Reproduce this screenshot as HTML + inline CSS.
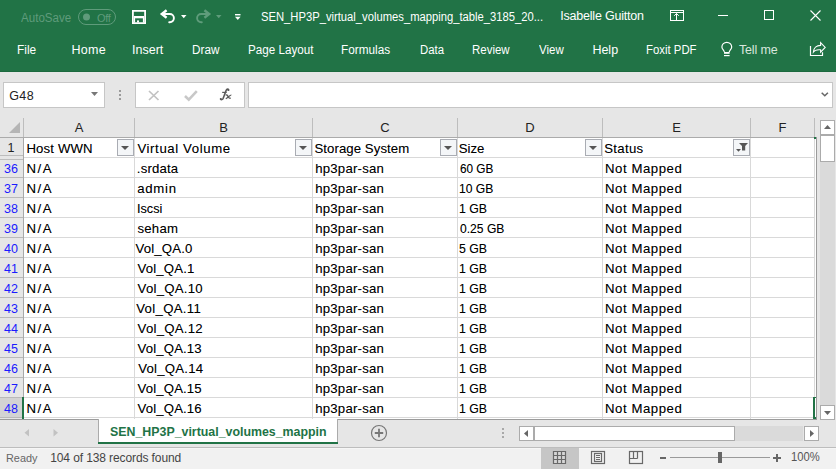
<!DOCTYPE html><html><head><meta charset="utf-8"><style>
html,body{margin:0;padding:0;width:836px;height:469px;overflow:hidden;background:#e6e6e6;}
body{position:relative;font-family:"Liberation Sans", sans-serif;}
.t{position:absolute;white-space:nowrap;}
.r{position:absolute;box-sizing:border-box;}
svg{position:absolute;overflow:visible;}
</style></head><body>
<div class="r" style="left:0px;top:0px;width:836px;height:71px;background:#217346;"></div>
<div class="r" style="left:0px;top:71px;width:836px;height:1px;background:#1c6a3f;"></div>
<div class="t" style="left:20.6px;top:10.67px;font-size:12.5px;line-height:15px;color:#5f9b7b;transform:scaleX(0.9262);transform-origin:0 0;">AutoSave</div>
<div class="r" style="left:78px;top:9px;width:38px;height:16px;border:1px solid #5f9b7b;border-radius:8px;"></div>
<svg style="left:0;top:0" width="1" height="1"><circle cx="86.5" cy="17" r="3.5" fill="#5f9b7b"/></svg>
<div class="t" style="left:97px;top:11.69px;font-size:11px;line-height:13px;color:#5f9b7b;letter-spacing:-0.3px;">Off</div>
<svg style="left:132px;top:10px" width="14" height="14" viewBox="0 0 14 14">
<path d="M0.9,0.9 H13.1 V13.1 H0.9 Z" fill="none" stroke="#fff" stroke-width="1.8"/>
<rect x="2" y="6" width="10" height="2.3" fill="#fff"/>
<rect x="2" y="8" width="1.1" height="4.5" fill="#fff"/><rect x="10.9" y="8" width="1.1" height="4.5" fill="#fff"/>
<rect x="5" y="10.4" width="2" height="2" fill="#fff"/>
</svg>
<svg style="left:160px;top:9px" width="16" height="15" viewBox="0 0 16 15">
<path d="M2.5,5 H9.8 A4.1,4.1 0 0 1 9.8,13.2 H9.2" fill="none" stroke="#fff" stroke-width="1.9" stroke-linecap="round"/>
<path d="M6.6,1.2 L1.8,5 L6.6,8.7" fill="none" stroke="#fff" stroke-width="2.4"/>
</svg>
<svg style="left:181px;top:15px" width="6" height="4"><path d="M0,0 H5.5 L2.75,3.2 Z" fill="#fff"/></svg>
<svg style="left:196px;top:9px" width="16" height="15" viewBox="0 0 16 15">
<path d="M12.5,5 H5.2 A4.1,4.1 0 0 0 5.2,13.2 H5.8" fill="none" stroke="#5f9c7b" stroke-width="1.9" stroke-linecap="round"/>
<path d="M8.4,1.2 L13.2,5 L8.4,8.7" fill="none" stroke="#5f9c7b" stroke-width="2.4"/>
</svg>
<svg style="left:216px;top:15px" width="6" height="4"><path d="M0,0 H5.5 L2.75,3.2 Z" fill="#5f9c7b"/></svg>
<svg style="left:235px;top:13.8px" width="6" height="7"><rect x="0" y="0" width="5.5" height="1.4" fill="#fff"/><path d="M0,2.8 H5.6 L2.8,6 Z" fill="#fff"/></svg>
<div class="t" style="left:260.8px;top:9.87px;font-size:12.5px;line-height:15px;color:#fff;transform:scaleX(0.8981);transform-origin:0 0;">SEN_HP3P_virtual_volumes_mapping_table_3185_20...</div>
<div class="t" style="left:560.2px;top:8.67px;font-size:12.5px;line-height:15px;color:#fff;letter-spacing:-0.2px;">Isabelle Guitton</div>
<svg style="left:670px;top:10px" width="14" height="11" viewBox="0 0 14 11">
<rect x="0.5" y="0.5" width="13" height="10" fill="none" stroke="#fff" stroke-width="1"/>
<path d="M0.5,2.5 H13.5" stroke="#fff" stroke-width="1"/>
<path d="M6.5,10.5 V3.5 M4.2,5.8 L6.5,3.5 L8.8,5.8" fill="none" stroke="#fff" stroke-width="1"/>
</svg>
<div class="r" style="left:718px;top:15px;width:10px;height:1px;background:#fff;"></div>
<div class="r" style="left:764px;top:10px;width:10px;height:10px;border:1px solid #fff;"></div>
<svg style="left:810px;top:10px" width="11" height="11"><path d="M0.5,0.5 L10.5,10.5 M10.5,0.5 L0.5,10.5" stroke="#fff" stroke-width="1.1"/></svg>
<div class="t" style="left:17.2px;top:42.67px;font-size:12.5px;line-height:15px;color:#fff;transform:scaleX(0.9502);transform-origin:0 0;">File</div>
<div class="t" style="left:71.4px;top:42.67px;font-size:12.5px;line-height:15px;color:#fff;letter-spacing:0.333px;">Home</div>
<div class="t" style="left:132.0px;top:42.67px;font-size:12.5px;line-height:15px;color:#fff;">Insert</div>
<div class="t" style="left:191.6px;top:42.67px;font-size:12.5px;line-height:15px;color:#fff;transform:scaleX(0.9384);transform-origin:0 0;">Draw</div>
<div class="t" style="left:247.8px;top:42.67px;font-size:12.5px;line-height:15px;color:#fff;transform:scaleX(0.9316);transform-origin:0 0;">Page Layout</div>
<div class="t" style="left:341.0px;top:42.67px;font-size:12.5px;line-height:15px;color:#fff;transform:scaleX(0.9424);transform-origin:0 0;">Formulas</div>
<div class="t" style="left:420.2px;top:42.67px;font-size:12.5px;line-height:15px;color:#fff;transform:scaleX(0.9092);transform-origin:0 0;">Data</div>
<div class="t" style="left:472.4px;top:42.67px;font-size:12.5px;line-height:15px;color:#fff;transform:scaleX(0.9172);transform-origin:0 0;">Review</div>
<div class="t" style="left:539.2px;top:42.67px;font-size:12.5px;line-height:15px;color:#fff;transform:scaleX(0.9186);transform-origin:0 0;">View</div>
<div class="t" style="left:592.4px;top:42.67px;font-size:12.5px;line-height:15px;color:#fff;">Help</div>
<div class="t" style="left:646.0px;top:42.67px;font-size:12.5px;line-height:15px;color:#fff;transform:scaleX(0.9100);transform-origin:0 0;">Foxit PDF</div>
<div class="t" style="left:739.0px;top:42.67px;font-size:12.5px;line-height:15px;color:#d8e6dd;letter-spacing:-0.167px;">Tell me</div>
<svg style="left:721px;top:42px" width="12" height="15" viewBox="0 0 12 15">
<path d="M3.3,10 C3.3,8.3 0.9,7.2 0.9,4.9 A4.9,4.6 0 0 1 10.7,4.9 C10.7,7.2 8.3,8.3 8.3,10" fill="none" stroke="#fff" stroke-width="1.2"/>
<rect x="3" y="10" width="5.6" height="1.8" fill="#fff"/>
<rect x="3" y="13" width="5.6" height="1.2" fill="#fff"/>
</svg>
<svg style="left:806px;top:38px" width="24" height="22" viewBox="0 0 24 22">
<path d="M4.5,8 V17.5 H16.5 V14.3" fill="none" stroke="#fff" stroke-width="1.2"/>
<path d="M7.4,14 C7.6,10 10.6,7.4 14.6,7.4 V4.6 L19.2,9.4 L14.6,14.2 V11.8 C11.6,11.5 8.6,12.2 7.4,14 Z" fill="none" stroke="#fff" stroke-width="1.1" stroke-linejoin="miter"/>
</svg>
<div class="r" style="left:0px;top:72px;width:836px;height:46px;background:#e6e6e6;"></div>
<div class="r" style="left:3px;top:82px;width:102px;height:26px;background:#fff;border:1px solid #c6c6c6;"></div>
<div class="t" style="left:9.3px;top:88.87px;font-size:12.5px;line-height:15px;color:#222;letter-spacing:0.35px;">G48</div>
<svg style="left:91px;top:92px" width="8" height="5"><path d="M0,0 H7 L3.5,4 Z" fill="#777"/></svg>
<div class="r" style="left:119px;top:90px;width:2px;height:2px;background:#9a9a9a;"></div>
<div class="r" style="left:119px;top:94px;width:2px;height:2px;background:#9a9a9a;"></div>
<div class="r" style="left:119px;top:98px;width:2px;height:2px;background:#9a9a9a;"></div>
<div class="r" style="left:135px;top:82px;width:110px;height:26px;background:#fff;border:1px solid #c6c6c6;"></div>
<svg style="left:148px;top:90px" width="12" height="11"><path d="M1,1 L10.5,10 M10.5,1 L1,10" stroke="#c2c2c2" stroke-width="1.7"/></svg>
<svg style="left:184px;top:90px" width="14" height="11"><path d="M1,6 L4.8,9.6 L12.8,1.2" fill="none" stroke="#c8c8c8" stroke-width="2.6"/></svg>
<svg style="left:216px;top:86px" width="20" height="18" viewBox="0 0 20 18">
<path d="M12.6,4 C12.3,2.9 10.8,2.7 10.2,4.2 L7.2,12.3 C6.6,13.8 5.2,14 4.6,13" fill="none" stroke="#5a5a5a" stroke-width="1.6" stroke-linecap="round"/>
<circle cx="12.3" cy="4" r="1" fill="#5a5a5a"/><circle cx="4.8" cy="13" r="0.9" fill="#5a5a5a"/>
<path d="M6.2,6.4 H10.7" stroke="#5a5a5a" stroke-width="1.2"/>
<path d="M9.6,9.2 C10.8,8.4 11.6,9.4 12.1,10.6 C12.6,11.9 13.5,12.6 14.8,12" fill="none" stroke="#5a5a5a" stroke-width="1.3"/>
<path d="M15.4,9 C14.2,8.8 12.6,10.8 9.8,12.7" fill="none" stroke="#5a5a5a" stroke-width="1.2"/>
</svg>
<div class="r" style="left:248px;top:82px;width:585px;height:26px;background:#fff;border:1px solid #c6c6c6;"></div>
<svg style="left:821px;top:92px" width="8" height="5"><path d="M0.7,0.7 L3.8,3.8 L6.9,0.7" fill="none" stroke="#666" stroke-width="1.5"/></svg>
<div class="r" style="left:0px;top:118px;width:815px;height:20px;background:#e6e6e6;"></div>
<svg style="left:9px;top:122px" width="12" height="12"><path d="M11,0 V11 H0 Z" fill="#b5b5b5"/></svg>
<div class="r" style="left:23px;top:118px;width:1px;height:20px;background:#bdbdbd;"></div>
<div class="r" style="left:134px;top:118px;width:1px;height:20px;background:#bdbdbd;"></div>
<div class="r" style="left:312px;top:118px;width:1px;height:20px;background:#bdbdbd;"></div>
<div class="r" style="left:457px;top:118px;width:1px;height:20px;background:#bdbdbd;"></div>
<div class="r" style="left:602px;top:118px;width:1px;height:20px;background:#bdbdbd;"></div>
<div class="r" style="left:750px;top:118px;width:1px;height:20px;background:#bdbdbd;"></div>
<div class="r" style="left:814px;top:118px;width:1px;height:20px;background:#bdbdbd;"></div>
<div class="t" style="left:24px;top:119.50px;font-size:13px;line-height:16px;color:#222;width:110px;text-align:center;">A</div>
<div class="t" style="left:135px;top:119.50px;font-size:13px;line-height:16px;color:#222;width:177px;text-align:center;">B</div>
<div class="t" style="left:313px;top:119.50px;font-size:13px;line-height:16px;color:#222;width:144px;text-align:center;">C</div>
<div class="t" style="left:458px;top:119.50px;font-size:13px;line-height:16px;color:#222;width:144px;text-align:center;">D</div>
<div class="t" style="left:603px;top:119.50px;font-size:13px;line-height:16px;color:#222;width:147px;text-align:center;">E</div>
<div class="t" style="left:751px;top:119.50px;font-size:13px;line-height:16px;color:#222;width:63px;text-align:center;">F</div>
<div class="r" style="left:0px;top:137px;width:815px;height:1px;background:#ababab;"></div>
<div class="r" style="left:0px;top:138px;width:23px;height:281px;background:#e6e6e6;"></div>
<div class="r" style="left:23px;top:138px;width:1px;height:281px;background:#a8a8a8;"></div>
<div class="r" style="left:24px;top:138px;width:792px;height:281px;background:#fff;"></div>
<div class="r" style="left:0px;top:155px;width:23px;height:1px;background:#bdbdbd;"></div>
<div class="r" style="left:0px;top:159px;width:23px;height:1px;background:#bdbdbd;"></div>
<div class="r" style="left:24px;top:157px;width:791px;height:1px;background:#d9d9d9;"></div>
<div class="r" style="left:134px;top:138px;width:1px;height:281px;background:#d9d9d9;"></div>
<div class="r" style="left:312px;top:138px;width:1px;height:281px;background:#d9d9d9;"></div>
<div class="r" style="left:457px;top:138px;width:1px;height:281px;background:#d9d9d9;"></div>
<div class="r" style="left:602px;top:138px;width:1px;height:281px;background:#d9d9d9;"></div>
<div class="r" style="left:750px;top:138px;width:1px;height:281px;background:#d9d9d9;"></div>
<div class="r" style="left:814px;top:138px;width:1px;height:281px;background:#d9d9d9;"></div>
<div class="r" style="left:24px;top:177px;width:791px;height:1px;background:#d9d9d9;"></div>
<div class="r" style="left:0px;top:177px;width:23px;height:1px;background:#b9b9b9;"></div>
<div class="r" style="left:24px;top:197px;width:791px;height:1px;background:#d9d9d9;"></div>
<div class="r" style="left:0px;top:197px;width:23px;height:1px;background:#b9b9b9;"></div>
<div class="r" style="left:24px;top:217px;width:791px;height:1px;background:#d9d9d9;"></div>
<div class="r" style="left:0px;top:217px;width:23px;height:1px;background:#b9b9b9;"></div>
<div class="r" style="left:24px;top:237px;width:791px;height:1px;background:#d9d9d9;"></div>
<div class="r" style="left:0px;top:237px;width:23px;height:1px;background:#b9b9b9;"></div>
<div class="r" style="left:24px;top:257px;width:791px;height:1px;background:#d9d9d9;"></div>
<div class="r" style="left:0px;top:257px;width:23px;height:1px;background:#b9b9b9;"></div>
<div class="r" style="left:24px;top:277px;width:791px;height:1px;background:#d9d9d9;"></div>
<div class="r" style="left:0px;top:277px;width:23px;height:1px;background:#b9b9b9;"></div>
<div class="r" style="left:24px;top:297px;width:791px;height:1px;background:#d9d9d9;"></div>
<div class="r" style="left:0px;top:297px;width:23px;height:1px;background:#b9b9b9;"></div>
<div class="r" style="left:24px;top:317px;width:791px;height:1px;background:#d9d9d9;"></div>
<div class="r" style="left:0px;top:317px;width:23px;height:1px;background:#b9b9b9;"></div>
<div class="r" style="left:24px;top:337px;width:791px;height:1px;background:#d9d9d9;"></div>
<div class="r" style="left:0px;top:337px;width:23px;height:1px;background:#b9b9b9;"></div>
<div class="r" style="left:24px;top:357px;width:791px;height:1px;background:#d9d9d9;"></div>
<div class="r" style="left:0px;top:357px;width:23px;height:1px;background:#b9b9b9;"></div>
<div class="r" style="left:24px;top:377px;width:791px;height:1px;background:#d9d9d9;"></div>
<div class="r" style="left:0px;top:377px;width:23px;height:1px;background:#b9b9b9;"></div>
<div class="r" style="left:24px;top:397px;width:791px;height:1px;background:#d9d9d9;"></div>
<div class="r" style="left:0px;top:397px;width:23px;height:1px;background:#b9b9b9;"></div>
<div class="r" style="left:24px;top:417px;width:791px;height:1px;background:#d9d9d9;"></div>
<div class="r" style="left:0px;top:417px;width:23px;height:1px;background:#b9b9b9;"></div>
<div class="t" style="left:0px;top:141.37px;font-size:12.5px;line-height:15px;color:#222;width:22px;text-align:center;">1</div>
<div class="t" style="left:0px;top:161.67px;font-size:12.5px;line-height:15px;color:#1a1aff;width:22px;text-align:center;">36</div>
<div class="t" style="left:0px;top:181.67px;font-size:12.5px;line-height:15px;color:#1a1aff;width:22px;text-align:center;">37</div>
<div class="t" style="left:0px;top:201.67px;font-size:12.5px;line-height:15px;color:#1a1aff;width:22px;text-align:center;">38</div>
<div class="t" style="left:0px;top:221.67px;font-size:12.5px;line-height:15px;color:#1a1aff;width:22px;text-align:center;">39</div>
<div class="t" style="left:0px;top:241.67px;font-size:12.5px;line-height:15px;color:#1a1aff;width:22px;text-align:center;">40</div>
<div class="t" style="left:0px;top:261.67px;font-size:12.5px;line-height:15px;color:#1a1aff;width:22px;text-align:center;">41</div>
<div class="t" style="left:0px;top:281.67px;font-size:12.5px;line-height:15px;color:#1a1aff;width:22px;text-align:center;">42</div>
<div class="t" style="left:0px;top:301.67px;font-size:12.5px;line-height:15px;color:#1a1aff;width:22px;text-align:center;">43</div>
<div class="t" style="left:0px;top:321.67px;font-size:12.5px;line-height:15px;color:#1a1aff;width:22px;text-align:center;">44</div>
<div class="t" style="left:0px;top:341.67px;font-size:12.5px;line-height:15px;color:#1a1aff;width:22px;text-align:center;">45</div>
<div class="t" style="left:0px;top:361.67px;font-size:12.5px;line-height:15px;color:#1a1aff;width:22px;text-align:center;">46</div>
<div class="t" style="left:0px;top:381.67px;font-size:12.5px;line-height:15px;color:#1a1aff;width:22px;text-align:center;">47</div>
<div class="t" style="left:0px;top:401.67px;font-size:12.5px;line-height:15px;color:#1a1aff;width:22px;text-align:center;">48</div>
<div class="t" style="left:26.4px;top:140.63px;font-size:13.2px;line-height:16px;color:#000;letter-spacing:0.143px;text-shadow:0 0 0.3px rgba(0,0,0,0.3);">Host WWN</div>
<div class="t" style="left:137.4px;top:140.63px;font-size:13.2px;line-height:16px;color:#000;letter-spacing:0.615px;text-shadow:0 0 0.3px rgba(0,0,0,0.3);">Virtual Volume</div>
<div class="t" style="left:314.4px;top:140.63px;font-size:13.2px;line-height:16px;color:#000;letter-spacing:0.077px;text-shadow:0 0 0.3px rgba(0,0,0,0.3);">Storage System</div>
<div class="t" style="left:458.8px;top:140.63px;font-size:13.2px;line-height:16px;color:#000;text-shadow:0 0 0.3px rgba(0,0,0,0.3);">Size</div>
<div class="t" style="left:604.2px;top:140.63px;font-size:13.2px;line-height:16px;color:#000;letter-spacing:0.32px;text-shadow:0 0 0.3px rgba(0,0,0,0.3);">Status</div>
<div class="r" style="left:117px;top:139px;width:17px;height:17px;background:#f4f6f8;border:1px solid #a9acb3;"></div>
<svg style="left:121px;top:146px" width="9" height="5"><path d="M0,0 H8 L4,4 Z" fill="#555"/></svg>
<div class="r" style="left:295px;top:139px;width:17px;height:17px;background:#f4f6f8;border:1px solid #a9acb3;"></div>
<svg style="left:299px;top:146px" width="9" height="5"><path d="M0,0 H8 L4,4 Z" fill="#555"/></svg>
<div class="r" style="left:440px;top:139px;width:17px;height:17px;background:#f4f6f8;border:1px solid #a9acb3;"></div>
<svg style="left:444px;top:146px" width="9" height="5"><path d="M0,0 H8 L4,4 Z" fill="#555"/></svg>
<div class="r" style="left:585px;top:139px;width:17px;height:17px;background:#f4f6f8;border:1px solid #a9acb3;"></div>
<svg style="left:589px;top:146px" width="9" height="5"><path d="M0,0 H8 L4,4 Z" fill="#555"/></svg>
<div class="r" style="left:733px;top:139px;width:17px;height:17px;background:#f4f6f8;border:1px solid #a9acb3;"></div>
<svg style="left:736px;top:142px" width="13" height="13"><path d="M3,1 H12 L9.2,4 V8.5 H6 V4 Z" fill="#555"/><path d="M0,7 H5 L2.5,9.7 Z" fill="#555"/></svg>
<div class="t" style="left:26.6px;top:160.83px;font-size:13.2px;line-height:16px;color:#000;letter-spacing:1.5px;text-shadow:0 0 0.3px rgba(0,0,0,0.3);">N/A</div>
<div class="t" style="left:136.8px;top:160.83px;font-size:13.2px;line-height:16px;color:#000;letter-spacing:0.167px;text-shadow:0 0 0.3px rgba(0,0,0,0.3);">.srdata</div>
<div class="t" style="left:315.2px;top:160.83px;font-size:13.2px;line-height:16px;color:#000;letter-spacing:0.222px;text-shadow:0 0 0.3px rgba(0,0,0,0.3);">hp3par-san</div>
<div class="t" style="left:460.0px;top:160.83px;font-size:13.2px;line-height:16px;color:#000;text-shadow:0 0 0.3px rgba(0,0,0,0.3);transform:scaleX(0.8930);transform-origin:0 0;">60 GB</div>
<div class="t" style="left:605.0px;top:160.83px;font-size:13.2px;line-height:16px;color:#000;letter-spacing:0.556px;text-shadow:0 0 0.3px rgba(0,0,0,0.3);">Not Mapped</div>
<div class="t" style="left:26.6px;top:180.83px;font-size:13.2px;line-height:16px;color:#000;letter-spacing:1.5px;text-shadow:0 0 0.3px rgba(0,0,0,0.3);">N/A</div>
<div class="t" style="left:137.2px;top:180.83px;font-size:13.2px;line-height:16px;color:#000;letter-spacing:0.75px;text-shadow:0 0 0.3px rgba(0,0,0,0.3);">admin</div>
<div class="t" style="left:315.2px;top:180.83px;font-size:13.2px;line-height:16px;color:#000;letter-spacing:0.222px;text-shadow:0 0 0.3px rgba(0,0,0,0.3);">hp3par-san</div>
<div class="t" style="left:459.0px;top:180.83px;font-size:13.2px;line-height:16px;color:#000;text-shadow:0 0 0.3px rgba(0,0,0,0.3);transform:scaleX(0.9198);transform-origin:0 0;">10 GB</div>
<div class="t" style="left:605.0px;top:180.83px;font-size:13.2px;line-height:16px;color:#000;letter-spacing:0.556px;text-shadow:0 0 0.3px rgba(0,0,0,0.3);">Not Mapped</div>
<div class="t" style="left:26.6px;top:200.83px;font-size:13.2px;line-height:16px;color:#000;letter-spacing:1.5px;text-shadow:0 0 0.3px rgba(0,0,0,0.3);">N/A</div>
<div class="t" style="left:136.8px;top:200.83px;font-size:13.2px;line-height:16px;color:#000;text-shadow:0 0 0.3px rgba(0,0,0,0.3);transform:scaleX(0.9621);transform-origin:0 0;">Iscsi</div>
<div class="t" style="left:315.2px;top:200.83px;font-size:13.2px;line-height:16px;color:#000;letter-spacing:0.222px;text-shadow:0 0 0.3px rgba(0,0,0,0.3);">hp3par-san</div>
<div class="t" style="left:459.0px;top:200.83px;font-size:13.2px;line-height:16px;color:#000;text-shadow:0 0 0.3px rgba(0,0,0,0.3);transform:scaleX(0.9336);transform-origin:0 0;">1 GB</div>
<div class="t" style="left:605.0px;top:200.83px;font-size:13.2px;line-height:16px;color:#000;letter-spacing:0.556px;text-shadow:0 0 0.3px rgba(0,0,0,0.3);">Not Mapped</div>
<div class="t" style="left:26.6px;top:220.83px;font-size:13.2px;line-height:16px;color:#000;letter-spacing:1.5px;text-shadow:0 0 0.3px rgba(0,0,0,0.3);">N/A</div>
<div class="t" style="left:137.4px;top:220.83px;font-size:13.2px;line-height:16px;color:#000;letter-spacing:0.25px;text-shadow:0 0 0.3px rgba(0,0,0,0.3);">seham</div>
<div class="t" style="left:315.2px;top:220.83px;font-size:13.2px;line-height:16px;color:#000;letter-spacing:0.222px;text-shadow:0 0 0.3px rgba(0,0,0,0.3);">hp3par-san</div>
<div class="t" style="left:460.0px;top:220.83px;font-size:13.2px;line-height:16px;color:#000;text-shadow:0 0 0.3px rgba(0,0,0,0.3);transform:scaleX(0.9174);transform-origin:0 0;">0.25 GB</div>
<div class="t" style="left:605.0px;top:220.83px;font-size:13.2px;line-height:16px;color:#000;letter-spacing:0.556px;text-shadow:0 0 0.3px rgba(0,0,0,0.3);">Not Mapped</div>
<div class="t" style="left:26.6px;top:240.83px;font-size:13.2px;line-height:16px;color:#000;letter-spacing:1.5px;text-shadow:0 0 0.3px rgba(0,0,0,0.3);">N/A</div>
<div class="t" style="left:135.6px;top:240.83px;font-size:13.2px;line-height:16px;color:#000;letter-spacing:0.143px;text-shadow:0 0 0.3px rgba(0,0,0,0.3);">Vol_QA.0</div>
<div class="t" style="left:315.2px;top:240.83px;font-size:13.2px;line-height:16px;color:#000;letter-spacing:0.222px;text-shadow:0 0 0.3px rgba(0,0,0,0.3);">hp3par-san</div>
<div class="t" style="left:459.0px;top:240.83px;font-size:13.2px;line-height:16px;color:#000;text-shadow:0 0 0.3px rgba(0,0,0,0.3);transform:scaleX(0.9336);transform-origin:0 0;">5 GB</div>
<div class="t" style="left:605.0px;top:240.83px;font-size:13.2px;line-height:16px;color:#000;letter-spacing:0.556px;text-shadow:0 0 0.3px rgba(0,0,0,0.3);">Not Mapped</div>
<div class="t" style="left:26.6px;top:260.83px;font-size:13.2px;line-height:16px;color:#000;letter-spacing:1.5px;text-shadow:0 0 0.3px rgba(0,0,0,0.3);">N/A</div>
<div class="t" style="left:137.6px;top:260.83px;font-size:13.2px;line-height:16px;color:#000;letter-spacing:0.143px;text-shadow:0 0 0.3px rgba(0,0,0,0.3);">Vol_QA.1</div>
<div class="t" style="left:315.2px;top:260.83px;font-size:13.2px;line-height:16px;color:#000;letter-spacing:0.222px;text-shadow:0 0 0.3px rgba(0,0,0,0.3);">hp3par-san</div>
<div class="t" style="left:459.0px;top:260.83px;font-size:13.2px;line-height:16px;color:#000;text-shadow:0 0 0.3px rgba(0,0,0,0.3);transform:scaleX(0.9336);transform-origin:0 0;">1 GB</div>
<div class="t" style="left:605.0px;top:260.83px;font-size:13.2px;line-height:16px;color:#000;letter-spacing:0.556px;text-shadow:0 0 0.3px rgba(0,0,0,0.3);">Not Mapped</div>
<div class="t" style="left:26.6px;top:280.83px;font-size:13.2px;line-height:16px;color:#000;letter-spacing:1.5px;text-shadow:0 0 0.3px rgba(0,0,0,0.3);">N/A</div>
<div class="t" style="left:137.6px;top:280.83px;font-size:13.2px;line-height:16px;color:#000;letter-spacing:0.25px;text-shadow:0 0 0.3px rgba(0,0,0,0.3);">Vol_QA.10</div>
<div class="t" style="left:315.2px;top:280.83px;font-size:13.2px;line-height:16px;color:#000;letter-spacing:0.222px;text-shadow:0 0 0.3px rgba(0,0,0,0.3);">hp3par-san</div>
<div class="t" style="left:459.0px;top:280.83px;font-size:13.2px;line-height:16px;color:#000;text-shadow:0 0 0.3px rgba(0,0,0,0.3);transform:scaleX(0.9336);transform-origin:0 0;">1 GB</div>
<div class="t" style="left:605.0px;top:280.83px;font-size:13.2px;line-height:16px;color:#000;letter-spacing:0.556px;text-shadow:0 0 0.3px rgba(0,0,0,0.3);">Not Mapped</div>
<div class="t" style="left:26.6px;top:300.83px;font-size:13.2px;line-height:16px;color:#000;letter-spacing:1.5px;text-shadow:0 0 0.3px rgba(0,0,0,0.3);">N/A</div>
<div class="t" style="left:136.2px;top:300.83px;font-size:13.2px;line-height:16px;color:#000;letter-spacing:0.325px;text-shadow:0 0 0.3px rgba(0,0,0,0.3);">Vol_QA.11</div>
<div class="t" style="left:315.2px;top:300.83px;font-size:13.2px;line-height:16px;color:#000;letter-spacing:0.222px;text-shadow:0 0 0.3px rgba(0,0,0,0.3);">hp3par-san</div>
<div class="t" style="left:459.0px;top:300.83px;font-size:13.2px;line-height:16px;color:#000;text-shadow:0 0 0.3px rgba(0,0,0,0.3);transform:scaleX(0.9336);transform-origin:0 0;">1 GB</div>
<div class="t" style="left:605.0px;top:300.83px;font-size:13.2px;line-height:16px;color:#000;letter-spacing:0.556px;text-shadow:0 0 0.3px rgba(0,0,0,0.3);">Not Mapped</div>
<div class="t" style="left:26.6px;top:320.83px;font-size:13.2px;line-height:16px;color:#000;letter-spacing:1.5px;text-shadow:0 0 0.3px rgba(0,0,0,0.3);">N/A</div>
<div class="t" style="left:137.6px;top:320.83px;font-size:13.2px;line-height:16px;color:#000;letter-spacing:0.25px;text-shadow:0 0 0.3px rgba(0,0,0,0.3);">Vol_QA.12</div>
<div class="t" style="left:315.2px;top:320.83px;font-size:13.2px;line-height:16px;color:#000;letter-spacing:0.222px;text-shadow:0 0 0.3px rgba(0,0,0,0.3);">hp3par-san</div>
<div class="t" style="left:459.0px;top:320.83px;font-size:13.2px;line-height:16px;color:#000;text-shadow:0 0 0.3px rgba(0,0,0,0.3);transform:scaleX(0.9336);transform-origin:0 0;">1 GB</div>
<div class="t" style="left:605.0px;top:320.83px;font-size:13.2px;line-height:16px;color:#000;letter-spacing:0.556px;text-shadow:0 0 0.3px rgba(0,0,0,0.3);">Not Mapped</div>
<div class="t" style="left:26.6px;top:340.83px;font-size:13.2px;line-height:16px;color:#000;letter-spacing:1.5px;text-shadow:0 0 0.3px rgba(0,0,0,0.3);">N/A</div>
<div class="t" style="left:137.6px;top:340.83px;font-size:13.2px;line-height:16px;color:#000;letter-spacing:0.125px;text-shadow:0 0 0.3px rgba(0,0,0,0.3);">Vol_QA.13</div>
<div class="t" style="left:315.2px;top:340.83px;font-size:13.2px;line-height:16px;color:#000;letter-spacing:0.222px;text-shadow:0 0 0.3px rgba(0,0,0,0.3);">hp3par-san</div>
<div class="t" style="left:459.0px;top:340.83px;font-size:13.2px;line-height:16px;color:#000;text-shadow:0 0 0.3px rgba(0,0,0,0.3);transform:scaleX(0.9336);transform-origin:0 0;">1 GB</div>
<div class="t" style="left:605.0px;top:340.83px;font-size:13.2px;line-height:16px;color:#000;letter-spacing:0.556px;text-shadow:0 0 0.3px rgba(0,0,0,0.3);">Not Mapped</div>
<div class="t" style="left:26.6px;top:360.83px;font-size:13.2px;line-height:16px;color:#000;letter-spacing:1.5px;text-shadow:0 0 0.3px rgba(0,0,0,0.3);">N/A</div>
<div class="t" style="left:138.2px;top:360.83px;font-size:13.2px;line-height:16px;color:#000;letter-spacing:0.225px;text-shadow:0 0 0.3px rgba(0,0,0,0.3);">Vol_QA.14</div>
<div class="t" style="left:315.2px;top:360.83px;font-size:13.2px;line-height:16px;color:#000;letter-spacing:0.222px;text-shadow:0 0 0.3px rgba(0,0,0,0.3);">hp3par-san</div>
<div class="t" style="left:459.0px;top:360.83px;font-size:13.2px;line-height:16px;color:#000;text-shadow:0 0 0.3px rgba(0,0,0,0.3);transform:scaleX(0.9336);transform-origin:0 0;">1 GB</div>
<div class="t" style="left:605.0px;top:360.83px;font-size:13.2px;line-height:16px;color:#000;letter-spacing:0.556px;text-shadow:0 0 0.3px rgba(0,0,0,0.3);">Not Mapped</div>
<div class="t" style="left:26.6px;top:380.83px;font-size:13.2px;line-height:16px;color:#000;letter-spacing:1.5px;text-shadow:0 0 0.3px rgba(0,0,0,0.3);">N/A</div>
<div class="t" style="left:137.6px;top:380.83px;font-size:13.2px;line-height:16px;color:#000;letter-spacing:0.125px;text-shadow:0 0 0.3px rgba(0,0,0,0.3);">Vol_QA.15</div>
<div class="t" style="left:315.2px;top:380.83px;font-size:13.2px;line-height:16px;color:#000;letter-spacing:0.222px;text-shadow:0 0 0.3px rgba(0,0,0,0.3);">hp3par-san</div>
<div class="t" style="left:459.0px;top:380.83px;font-size:13.2px;line-height:16px;color:#000;text-shadow:0 0 0.3px rgba(0,0,0,0.3);transform:scaleX(0.9336);transform-origin:0 0;">1 GB</div>
<div class="t" style="left:605.0px;top:380.83px;font-size:13.2px;line-height:16px;color:#000;letter-spacing:0.556px;text-shadow:0 0 0.3px rgba(0,0,0,0.3);">Not Mapped</div>
<div class="t" style="left:26.6px;top:400.83px;font-size:13.2px;line-height:16px;color:#000;letter-spacing:1.5px;text-shadow:0 0 0.3px rgba(0,0,0,0.3);">N/A</div>
<div class="t" style="left:137.6px;top:400.83px;font-size:13.2px;line-height:16px;color:#000;letter-spacing:0.125px;text-shadow:0 0 0.3px rgba(0,0,0,0.3);">Vol_QA.16</div>
<div class="t" style="left:315.2px;top:400.83px;font-size:13.2px;line-height:16px;color:#000;letter-spacing:0.222px;text-shadow:0 0 0.3px rgba(0,0,0,0.3);">hp3par-san</div>
<div class="t" style="left:459.0px;top:400.83px;font-size:13.2px;line-height:16px;color:#000;text-shadow:0 0 0.3px rgba(0,0,0,0.3);transform:scaleX(0.9336);transform-origin:0 0;">1 GB</div>
<div class="t" style="left:605.0px;top:400.83px;font-size:13.2px;line-height:16px;color:#000;letter-spacing:0.556px;text-shadow:0 0 0.3px rgba(0,0,0,0.3);">Not Mapped</div>
<div class="r" style="left:0px;top:398px;width:22px;height:19px;background:#d3d3d3;"></div>
<div class="t" style="left:0px;top:401.67px;font-size:12.5px;line-height:15px;color:#1a1aff;width:22px;text-align:center;">48</div>
<div class="r" style="left:22px;top:397px;width:2px;height:22px;background:#217346;"></div>
<div class="r" style="left:815px;top:138px;width:1px;height:281px;background:#fff;"></div>
<div class="r" style="left:816px;top:137px;width:1px;height:283px;background:#9b9b9b;"></div>
<div class="r" style="left:814px;top:137px;width:2px;height:2px;background:#217346;"></div>
<div class="r" style="left:813px;top:397px;width:2px;height:22px;background:#217346;"></div>
<div class="r" style="left:813px;top:397px;width:3px;height:1px;background:#217346;"></div>
<div class="r" style="left:813px;top:417px;width:3px;height:2px;background:#217346;"></div>
<div class="r" style="left:0px;top:419px;width:817px;height:1px;background:#9b9b9b;"></div>
<div class="r" style="left:817px;top:118px;width:19px;height:302px;background:#e6e6e6;"></div>
<div class="r" style="left:820px;top:136px;width:15px;height:269px;background:#dadada;"></div>
<div class="r" style="left:820px;top:120px;width:15px;height:15px;background:#fff;border:1px solid #ababab;"></div>
<svg style="left:824px;top:125px" width="8" height="5"><path d="M0,4 H7 L3.5,0 Z" fill="#666"/></svg>
<div class="r" style="left:820px;top:135px;width:15px;height:27px;background:#fff;border:1px solid #ababab;"></div>
<div class="r" style="left:820px;top:405px;width:15px;height:15px;background:#fff;border:1px solid #ababab;"></div>
<svg style="left:824px;top:411px" width="8" height="5"><path d="M0,0 H7 L3.5,4 Z" fill="#666"/></svg>
<div class="r" style="left:0px;top:420px;width:836px;height:27px;background:#e6e6e6;"></div>
<svg style="left:24px;top:429px" width="6" height="8"><path d="M5,0 V7.5 L0.5,3.75 Z" fill="#c2c2c2"/></svg>
<svg style="left:53px;top:429px" width="6" height="8"><path d="M0.5,0 V7.5 L5,3.75 Z" fill="#c2c2c2"/></svg>
<div class="r" style="left:98px;top:419px;width:240px;height:25px;background:#fff;border-left:1px solid #ababab;border-right:1px solid #ababab;"></div>
<div class="r" style="left:98px;top:442px;width:240px;height:2px;background:#217346;"></div>
<div class="t" style="left:110.0px;top:423.80px;font-size:13px;line-height:16px;color:#217346;font-weight:bold;transform:scaleX(0.9517);transform-origin:0 0;">SEN_HP3P_virtual_volumes_mappin</div>
<svg style="left:370px;top:424px" width="18" height="18"><circle cx="9" cy="9" r="7.5" fill="none" stroke="#777" stroke-width="1.2"/><path d="M9,4.8 V13.2 M4.8,9 H13.2" stroke="#777" stroke-width="1.8"/></svg>
<div class="r" style="left:502px;top:428px;width:2px;height:2px;background:#a8a8a8;"></div>
<div class="r" style="left:502px;top:432px;width:2px;height:2px;background:#a8a8a8;"></div>
<div class="r" style="left:502px;top:436px;width:2px;height:2px;background:#a8a8a8;"></div>
<div class="r" style="left:519px;top:426px;width:284px;height:15px;background:#dadada;"></div>
<div class="r" style="left:519px;top:426px;width:15px;height:15px;background:#fff;border:1px solid #ababab;"></div>
<svg style="left:524px;top:430px" width="5" height="8"><path d="M4,0 V7 L0,3.5 Z" fill="#666"/></svg>
<div class="r" style="left:534px;top:426px;width:201px;height:15px;background:#fff;border:1px solid #ababab;"></div>
<div class="r" style="left:804px;top:426px;width:15px;height:15px;background:#fff;border:1px solid #ababab;"></div>
<svg style="left:810px;top:430px" width="5" height="8"><path d="M0,0 V7 L4,3.5 Z" fill="#666"/></svg>
<div class="r" style="left:0px;top:447px;width:836px;height:1px;background:#bdbdbd;"></div>
<div class="r" style="left:0px;top:448px;width:836px;height:1px;background:#f6f6f6;"></div>
<div class="r" style="left:0px;top:449px;width:836px;height:20px;background:#f1f1f1;"></div>
<div class="t" style="left:6.1px;top:450.72px;font-size:11.5px;line-height:14px;color:#666;transform:scaleX(0.9459);transform-origin:0 0;">Ready</div>
<div class="t" style="left:50.2px;top:450.54px;font-size:12px;line-height:14px;color:#444;letter-spacing:-0.104px;">104 of 138 records found</div>
<div class="r" style="left:541px;top:448px;width:38px;height:21px;background:#c6c6c6;"></div>
<svg style="left:553px;top:451px" width="14" height="14" viewBox="0 0 14 14">
<g fill="#d6d6d6"><rect x="1" y="1" width="11" height="11"/></g>
<path d="M0.5,0 V13 M4.5,0 V13 M8.5,0 V13 M12.5,0 V13 M0,0.5 H13 M0,4.5 H13 M0,8.5 H13 M0,12.5 H13" stroke="#686868" stroke-width="1.2"/>
</svg>
<svg style="left:591px;top:451px" width="15" height="14" viewBox="0 0 15 14">
<rect x="0.5" y="0.5" width="13" height="12" fill="none" stroke="#686868" stroke-width="1.2"/>
<rect x="3.5" y="2.5" width="7" height="8" fill="none" stroke="#686868" stroke-width="1.2"/>
<path d="M5,4.5 H9 M5,6.5 H9 M5,8.5 H9" stroke="#686868" stroke-width="1.2"/>
</svg>
<svg style="left:629px;top:451px" width="15" height="14" viewBox="0 0 15 14">
<rect x="0.5" y="0.5" width="13" height="12" fill="none" stroke="#686868" stroke-width="1.2"/>
<path d="M4.5,0.5 V7.5 M8.5,0.5 V7.5 M0.5,7.5 H8.5" fill="none" stroke="#686868" stroke-width="1.2"/>
</svg>
<div class="r" style="left:660px;top:457px;width:6px;height:2px;background:#666;"></div>
<div class="r" style="left:670px;top:457px;width:100px;height:1px;background:#9a9a9a;"></div>
<div class="r" style="left:718px;top:452px;width:4px;height:11px;background:#666;"></div>
<div class="r" style="left:773px;top:457px;width:8px;height:2px;background:#666;"></div>
<div class="r" style="left:776px;top:454px;width:2px;height:8px;background:#666;"></div>
<div class="t" style="left:791.0px;top:450.34px;font-size:12px;line-height:14px;color:#555;transform:scaleX(0.9347);transform-origin:0 0;">100%</div>
</body></html>
